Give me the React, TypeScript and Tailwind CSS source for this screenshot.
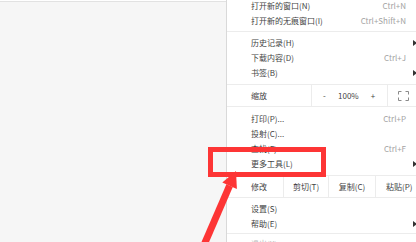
import React from "react";

type Item = { label: string; shortcut?: string; sub?: boolean };

const font = { fontFamily: '"Noto Sans CJK SC", "Noto Sans", sans-serif' };

const SubArrow = () => (
  <svg width="4" height="6" viewBox="0 0 4 6" className="block">
    <path d="M0 0 L4 3 L0 6 Z" fill="#333" />
  </svg>
);

const MenuRow = ({ item }: { item: Item }) => (
  <div className="flex h-[15px] items-center">
    <span className="flex-1 pl-[24px] text-[8px] text-[#444]">{item.label}</span>
    {item.shortcut && (
      <span className="text-[8px] text-[#a3a3a3]">{item.shortcut}</span>
    )}
    <div className="flex w-[14px] justify-end pr-[3px]">{item.sub && <SubArrow />}</div>
  </div>
);

const FullscreenIcon = () => (
  <svg width="11" height="10" viewBox="0 0 11 10" fill="none" stroke="#8a8a8a" strokeWidth="1">
    <path d="M0.5 3.5 V0.5 H3.5" />
    <path d="M7.5 0.5 H10.5 V3.5" />
    <path d="M0.5 6.5 V9.5 H3.5" />
    <path d="M7.5 9.5 H10.5 V6.5" />
  </svg>
);

export default function App() {
  const top: Item[] = [
    { label: "打开新的窗口(N)", shortcut: "Ctrl+N" },
    { label: "打开新的无痕窗口(I)", shortcut: "Ctrl+Shift+N" },
  ];
  const mid: Item[] = [
    { label: "历史记录(H)", sub: true },
    { label: "下载内容(D)", shortcut: "Ctrl+J" },
    { label: "书签(B)", sub: true },
  ];
  const tools: Item[] = [
    { label: "打印(P)...", shortcut: "Ctrl+P" },
    { label: "投射(C)..." },
    { label: "查找(F)...", shortcut: "Ctrl+F" },
    { label: "更多工具(L)", sub: true },
  ];
  const bottom: Item[] = [
    { label: "设置(S)" },
    { label: "帮助(E)", sub: true },
  ];

  return (
    <div className="relative flex h-[242px] w-[416px] overflow-hidden bg-white" style={font}>
      {/* page behind the menu */}
      <div className="mt-px h-full w-[226px] shrink-0 border-t border-[#e2e2e2] bg-[#f6f6f6]" />

      {/* browser menu */}
      <div className="w-[194px] shrink-0 border-l border-[#d9d9d9] bg-white">
        <div className="-mt-[2px]">
          {top.map((i) => (
            <MenuRow key={i.label} item={i} />
          ))}
        </div>
        <div className="flex h-[7px] items-center">
          <div className="h-px w-full bg-[#ececec]" />
        </div>
        {mid.map((i) => (
          <MenuRow key={i.label} item={i} />
        ))}

        <div className="mt-[4px] flex h-[23px] border-y border-[#ececec]">
          <div className="flex w-[84px] items-center pl-[24px] text-[8px] text-[#444]">缩放</div>
          <div className="flex w-[76px] items-center border-l border-[#ececec] text-[8px] text-[#444]">
            <span className="ml-[11px] w-[12px]">-</span>
            <span className="ml-[3px]">100%</span>
            <span className="ml-[12px]">+</span>
          </div>
          <div className="flex flex-1 items-center border-l border-[#ececec] pl-[10px]">
            <FullscreenIcon />
          </div>
        </div>

        <div className="mt-[4px]">
          {tools.map((i) => (
            <MenuRow key={i.label} item={i} />
          ))}
        </div>

        <div className="mt-[4px] flex h-[23px] border-y border-[#ececec] text-[8px] text-[#444]">
          <div className="flex w-[56px] items-center pl-[24px]">修改</div>
          <div className="flex w-[45px] items-center justify-center border-l border-[#ececec]">剪切(T)</div>
          <div className="flex w-[47px] items-center justify-center border-l border-[#ececec]">复制(C)</div>
          <div className="flex flex-1 items-center border-l border-[#ececec] pl-[10px]">粘贴(P)</div>
        </div>

        <div className="mt-[3px]">
          {bottom.map((i) => (
            <MenuRow key={i.label} item={i} />
          ))}
        </div>
        <div className="flex h-[5px] items-center">
          <div className="h-px w-full bg-[#ececec]" />
        </div>
        <div className="flex h-[15px] items-center pl-[24px] text-[8px] text-[#bbb]">退出(X)</div>
      </div>

      {/* annotation: highlight box */}
      <div className="absolute left-[208px] top-[147px] h-[30px] w-[118px] border-[5px] border-[#fd3535]" />

      {/* annotation: arrow */}
      <svg className="absolute left-0 top-0" width="416" height="242" viewBox="0 0 416 242">
        <polygon
          points="200.8,243.6 226.4,184.3 232.8,187.1 207.2,246.4"
          fill="#fd3535"
        />
        <polygon points="236,171 222.3,182.5 236.9,188.9" fill="#fd3535" />
      </svg>
    </div>
  );
}
